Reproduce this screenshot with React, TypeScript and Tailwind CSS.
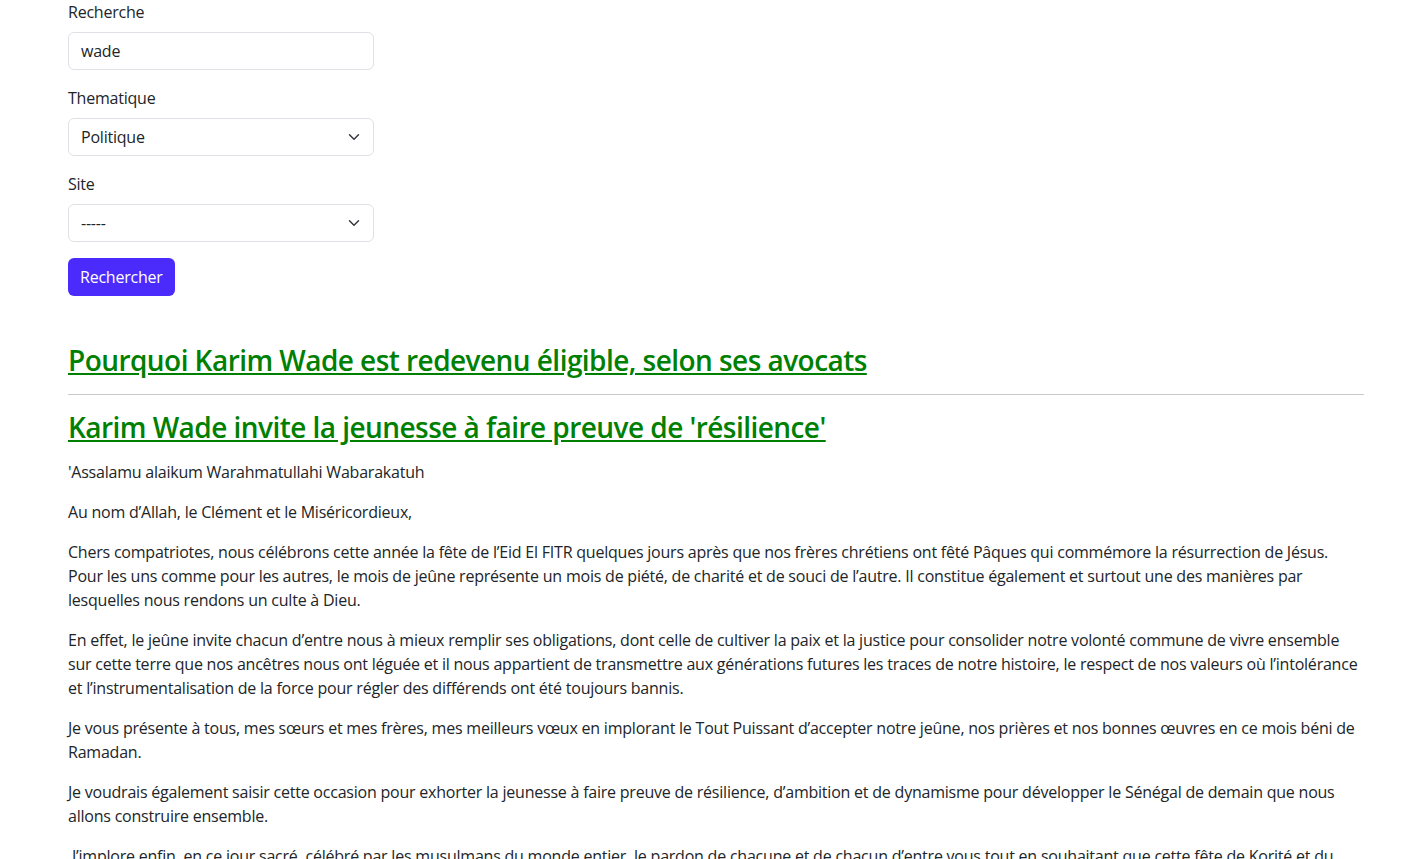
import React from "react";

const paragraphs = [
  "'Assalamu alaikum Warahmatullahi Wabarakatuh",
  "Au nom d’Allah, le Clément et le Miséricordieux,",
  "Chers compatriotes, nous célébrons cette année la fête de l’Eid El FITR quelques jours après que nos frères chrétiens ont fêté Pâques qui commémore la résurrection de Jésus. Pour les uns comme pour les autres, le mois de jeûne représente un mois de piété, de charité et de souci de l’autre. Il constitue également et surtout une des manières par lesquelles nous rendons un culte à Dieu.",
  "En effet, le jeûne invite chacun d’entre nous à mieux remplir ses obligations, dont celle de cultiver la paix et la justice pour consolider notre volonté commune de vivre ensemble sur cette terre que nos ancêtres nous ont léguée et il nous appartient de transmettre aux générations futures les traces de notre histoire, le respect de nos valeurs où l’intolérance et l’instrumentalisation de la force pour régler des différends ont été toujours bannis.",
  "Je vous présente à tous, mes sœurs et mes frères, mes meilleurs vœux en implorant le Tout Puissant d’accepter notre jeûne, nos prières et nos bonnes œuvres en ce mois béni de Ramadan.",
  "Je voudrais également saisir cette occasion pour exhorter la jeunesse à faire preuve de résilience, d’ambition et de dynamisme pour développer le Sénégal de demain que nous allons construire ensemble.",
  "\u00a0J’implore enfin, en ce jour sacré, célébré par les musulmans du monde entier, le pardon de chacune et de chacun d’entre vous tout en souhaitant que cette fête de Korité et du Ramadan soit pour nous tous une source de paix et de prospérité.",
];

function Field({ label, children }: { label: string; children: React.ReactNode }) {
  return (
    <div className="mb-4">
      <label className="block mb-2 leading-6">{label}</label>
      {children}
    </div>
  );
}

function Select({ value, options }: { value: string; options: string[] }) {
  return (
    <div className="relative">
      <select
        defaultValue={value}
        className="block w-full h-[38px] pl-3 pr-9 border border-[#dee2e6] rounded-[6px] bg-white appearance-none outline-none"
      >
        {options.map((o) => (
          <option key={o}>{o}</option>
        ))}
      </select>
      {/* same chevron as bootstrap's form-select, 16x12 box */}
      <svg
        className="pointer-events-none absolute right-3 top-1/2 -translate-y-1/2 w-4 h-3"
        viewBox="0 0 16 16"
        fill="none"
        stroke="#343a40"
        strokeWidth={2}
        strokeLinecap="round"
        strokeLinejoin="round"
      >
        <path d="m2 5 6 6 6-6" />
      </svg>
    </div>
  );
}

export default function App() {
  return (
    <div className="min-h-screen bg-white text-[#212529] text-base leading-6 tracking-[-0.22px] pl-[68px] pr-[43px] font-['Open_Sans',sans-serif]">
      <form className="w-[306px]" onSubmit={(e) => e.preventDefault()}>
        <Field label="Recherche">
          <input
            defaultValue="wade"
            className="block w-full h-[38px] px-3 border border-[#dee2e6] rounded-[6px] text-[#212529] outline-none"
          />
        </Field>
        <Field label="Thematique">
          <Select value="Politique" options={["Politique", "Economie", "Sport", "Societe"]} />
        </Field>
        <Field label="Site">
          <Select value="-----" options={["-----"]} />
        </Field>
        <button type="submit" className="h-[38px] px-3 rounded-[6px] bg-[#4b2bfb] text-white">
          Rechercher
        </button>
      </form>

      <div className="mt-12">
        <h3 className="text-[28px] leading-[1.2] font-semibold tracking-[-0.55px]">
          <a href="#" className="text-[#008000] underline">
            Pourquoi Karim Wade est redevenu éligible, selon ses avocats
          </a>
        </h3>
        <hr className="my-4 border-t border-[#c8c9ca]" />
        <h3 className="text-[28px] leading-[1.2] font-semibold tracking-[-0.55px] mb-4">
          <a href="#" className="text-[#008000] underline">
            Karim Wade invite la jeunesse à faire preuve de 'résilience'
          </a>
        </h3>
        {paragraphs.map((p, i) => (
          <p key={i} className="mb-4">
            {p}
          </p>
        ))}
      </div>
    </div>
  );
}
